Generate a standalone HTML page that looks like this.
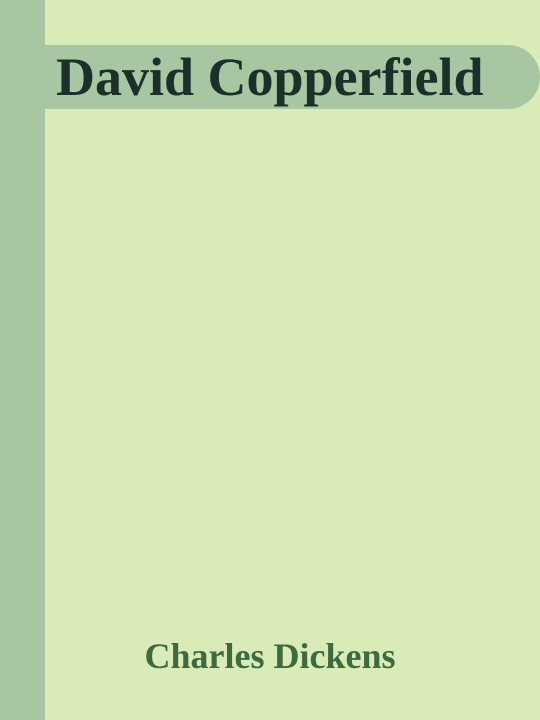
<!DOCTYPE html>
<html><head><style>
html,body{margin:0;padding:0;}
body{width:540px;height:720px;background:#d9ecb8;position:relative;overflow:hidden;font-family:"Liberation Serif",serif;}
.side{position:absolute;left:0;top:0;width:45px;height:720px;background:#a7c6a2;}
.bar{position:absolute;left:45px;top:45px;width:495px;height:64px;background:#a7c6a2;border-radius:0 32px 32px 0;}
.title{position:absolute;left:56px;top:49px;font-size:54px;font-weight:bold;color:#1b302a;line-height:56px;white-space:nowrap;}
.author{position:absolute;left:0;width:540px;text-align:center;top:636px;font-size:36px;font-weight:bold;color:#3f6a3f;line-height:40px;}
</style></head><body>
<div class="side"></div>
<div class="bar"></div>
<div class="title">David Copperfield</div>
<div class="author">Charles Dickens</div>
</body></html>
